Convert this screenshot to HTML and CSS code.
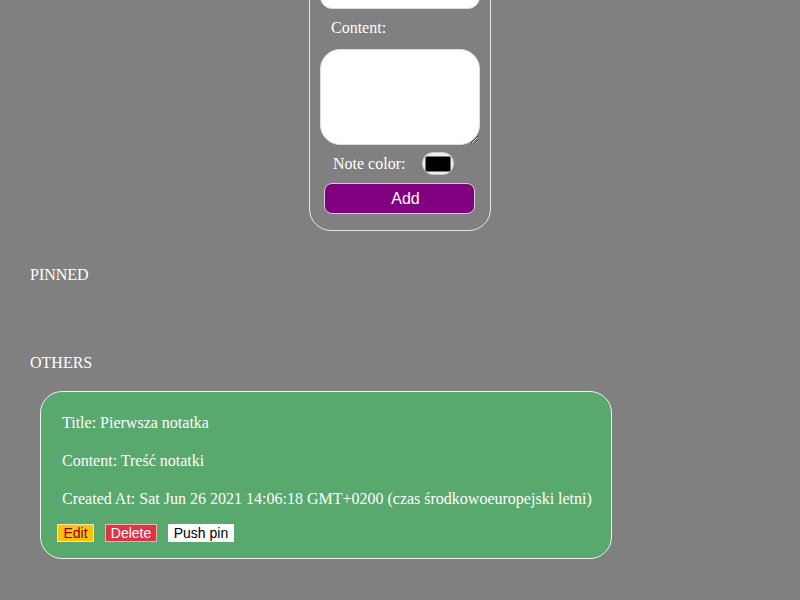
FILE: index.html
```html
<!DOCTYPE html>
<html>
<head>
<meta charset="utf-8">
<link rel="stylesheet" href="styles.css">
</head>
<body>
<div class="app">
  <form class="note-form">
    <input class="title-input" type="text">
    <label class="lbl">Content:</label>
    <textarea class="content-input"></textarea>
    <div class="color-row">
      <span class="color-label">Note color:</span>
      <span class="color-input"><span class="swatch"></span></span>
    </div>
    <button type="button" class="add-btn">Add</button>
  </form>

  <section class="group">
    <h2 class="group-title first">PINNED</h2>
    <div class="notes pinned"></div>
  </section>

  <section class="group">
    <h2 class="group-title">OTHERS</h2>
    <div class="notes">
      <div class="note">
        <p>Title: Pierwsza notatka</p>
        <p>Content: Treść notatki</p>
        <p>Created At: Sat Jun 26 2021 14:06:18 GMT+0200 (czas środkowoeuropejski letni)</p>
        <div class="actions">
          <button type="button" class="btn edit">Edit</button>
          <button type="button" class="btn delete">Delete</button>
          <button type="button" class="btn pin">Push pin</button>
        </div>
      </div>
    </div>
  </section>
</div>
</body>
</html>
```
FILE: styles.css
```css
html, body {
  margin: 0;
  padding: 0;
  background: #808080;
  font-family: "Liberation Serif", "Times New Roman", serif;
  font-size: 16px;
  color: #ffffff;
  overflow: hidden;
}

.app {
  padding: 0 8px;
}

.note-form {
  width: 160px;
  margin: -32px auto 0;
  padding: 10px 10px 16px;
  border: 1px solid #e6e6e6;
  border-radius: 22px;
}

.lbl {
  display: block;
  line-height: 18px;
  margin: 10px 0 12px 11px;
}

.title-input {
  display: block;
  box-sizing: border-box;
  width: 160px;
  height: 30px;
  border: 1px solid #ddd;
  border-radius: 12px;
  background: #fff;
  margin: 0;
}

.content-input {
  display: block;
  box-sizing: border-box;
  width: 160px;
  height: 96px;
  border: 1px solid #ddd;
  border-radius: 20px;
  background: #fff;
  margin: 0;
}

.color-row {
  display: flex;
  align-items: center;
  height: 23px;
  margin-top: 7px;
  padding-left: 13px;
}

.color-label {
  line-height: 18px;
  width: 89px;
}

.color-input {
  box-sizing: border-box;
  width: 32px;
  height: 23px;
  border-radius: 11px;
  background: #efefef;
  border: 1px solid #c8c8c8;
  display: flex;
  align-items: center;
  justify-content: center;
}

.swatch {
  width: 24px;
  height: 14px;
  background: #000;
  border: 1px solid #777;
  border-radius: 2px;
}

.add-btn {
  display: block;
  box-sizing: border-box;
  width: 151px;
  height: 31px;
  margin: 8px 0 0 4px;
  padding: 0 0 0 12px;
  background: #800080;
  color: #fff;
  border: 1px solid #e0c8e0;
  border-radius: 8px;
  font-family: "Liberation Sans", Arial, sans-serif;
  font-size: 16px;
}

.group {
  padding: 0 22px;
}

.group-title {
  font-size: 16px;
  font-weight: normal;
  line-height: 18px;
  margin: 33px 0 0;
}

.group-title.first {
  margin-top: 35px;
}

.notes.pinned {
  height: 18px;
}

.notes {
  padding: 19px 10px 0;
}

.note {
  width: 538px;
  border: 1px solid #f0f0f0;
  border-radius: 22px;
  background: #59a86e;
  padding: 11px 16px 16px;
}

.note p {
  margin: 11px 0 20px 5px;
  line-height: 18px;
}

.note p:nth-of-type(3) {
  margin-bottom: 16px;
}

.actions {
  display: flex;
  gap: 11px;
}

.btn {
  box-sizing: border-box;
  height: 18px;
  padding: 0 4px;
  font-family: "Liberation Sans", Arial, sans-serif;
  font-size: 14px;
  line-height: 16px;
  border: 1px solid #fff;
  border-radius: 0;
}

.btn.edit {
  background: #ffc107;
  color: #800000;
  border-color: #f5e6b0;
  width: 37px;
}

.btn.delete {
  background: #dc3545;
  color: #fff;
  border-color: #f0b0b8;
  width: 52px;
}

.btn.pin {
  background: #fff;
  color: #000;
  width: 66px;
}
```
